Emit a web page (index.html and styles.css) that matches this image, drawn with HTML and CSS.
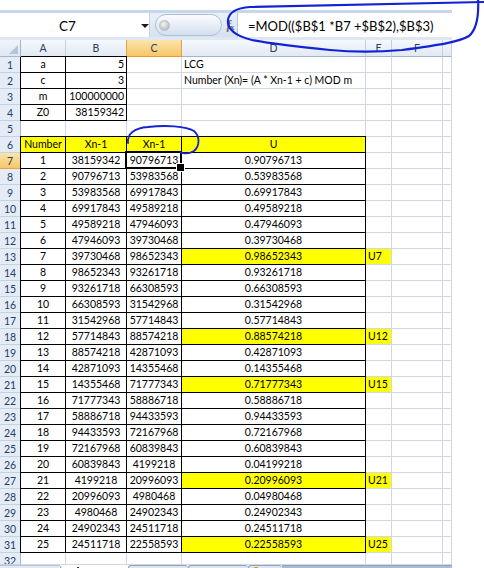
FILE: index.html
```html
<!DOCTYPE html>
<html>
<head>
<meta charset="utf-8">
<link rel="stylesheet" href="styles.css">
</head>
<body>
<div class="page">
  <div class="top"></div>
  <div class="fbar">
    <div class="namebox"><span class="ref">C7</span><span class="dd"></span></div>
    <div class="splitter"><div class="pill"><span class="knob"></span></div></div>
    <div class="fx"><i>f</i><small>x</small></div>
    <div class="formula">=MOD(($B$1 *B7 +$B$2),$B$3)</div>
  </div>
  <div class="fgap"></div>

  <div class="sheet">
    <div class="corner"><span class="tri"></span></div>
    <div class="ch">A</div><div class="ch">B</div><div class="ch on">C</div><div class="ch">D</div><div class="ch">E</div><div class="ch">F</div><div class="ch"></div>

    <div class="rh">1</div><div class="c m b">a</div><div class="c r b">5</div><div class="c"></div><div class="c l">LCG</div><div class="c"></div><div class="c"></div><div class="c"></div>
    <div class="rh">2</div><div class="c m b">c</div><div class="c r b">3</div><div class="c"></div><div class="c l">Number (Xn)= (A * Xn-1 + c) MOD m</div><div class="c"></div><div class="c"></div><div class="c"></div>
    <div class="rh">3</div><div class="c m b">m</div><div class="c r b">100000000</div><div class="c"></div><div class="c"></div><div class="c"></div><div class="c"></div><div class="c"></div>
    <div class="rh">4</div><div class="c m b">Z0</div><div class="c r b">38159342</div><div class="c"></div><div class="c"></div><div class="c"></div><div class="c"></div><div class="c"></div>
    <div class="rh">5</div><div class="c"></div><div class="c"></div><div class="c"></div><div class="c"></div><div class="c"></div><div class="c"></div><div class="c"></div>
    <div class="rh">6</div><div class="c m b y">Number</div><div class="c m b y">Xn-1</div><div class="c m b y">Xn-1</div><div class="c m b y">U</div><div class="c"></div><div class="c"></div><div class="c"></div>

    <div class="rh on">7</div><div class="c m b">1</div><div class="c m b">38159342</div><div class="c m b sel">90796713</div><div class="c m b">0.90796713</div><div class="c"></div><div class="c"></div><div class="c"></div>
    <div class="rh">8</div><div class="c m b">2</div><div class="c m b">90796713</div><div class="c m b">53983568</div><div class="c m b">0.53983568</div><div class="c"></div><div class="c"></div><div class="c"></div>
    <div class="rh">9</div><div class="c m b">3</div><div class="c m b">53983568</div><div class="c m b">69917843</div><div class="c m b">0.69917843</div><div class="c"></div><div class="c"></div><div class="c"></div>
    <div class="rh">10</div><div class="c m b">4</div><div class="c m b">69917843</div><div class="c m b">49589218</div><div class="c m b">0.49589218</div><div class="c"></div><div class="c"></div><div class="c"></div>
    <div class="rh">11</div><div class="c m b">5</div><div class="c m b">49589218</div><div class="c m b">47946093</div><div class="c m b">0.47946093</div><div class="c"></div><div class="c"></div><div class="c"></div>
    <div class="rh">12</div><div class="c m b">6</div><div class="c m b">47946093</div><div class="c m b">39730468</div><div class="c m b">0.39730468</div><div class="c"></div><div class="c"></div><div class="c"></div>
    <div class="rh">13</div><div class="c m b">7</div><div class="c m b">39730468</div><div class="c m b">98652343</div><div class="c m b y">0.98652343</div><div class="c l y">U7</div><div class="c"></div><div class="c"></div>
    <div class="rh">14</div><div class="c m b">8</div><div class="c m b">98652343</div><div class="c m b">93261718</div><div class="c m b">0.93261718</div><div class="c"></div><div class="c"></div><div class="c"></div>
    <div class="rh">15</div><div class="c m b">9</div><div class="c m b">93261718</div><div class="c m b">66308593</div><div class="c m b">0.66308593</div><div class="c"></div><div class="c"></div><div class="c"></div>
    <div class="rh">16</div><div class="c m b">10</div><div class="c m b">66308593</div><div class="c m b">31542968</div><div class="c m b">0.31542968</div><div class="c"></div><div class="c"></div><div class="c"></div>
    <div class="rh">17</div><div class="c m b">11</div><div class="c m b">31542968</div><div class="c m b">57714843</div><div class="c m b">0.57714843</div><div class="c"></div><div class="c"></div><div class="c"></div>
    <div class="rh">18</div><div class="c m b">12</div><div class="c m b">57714843</div><div class="c m b">88574218</div><div class="c m b y">0.88574218</div><div class="c l y">U12</div><div class="c"></div><div class="c"></div>
    <div class="rh">19</div><div class="c m b">13</div><div class="c m b">88574218</div><div class="c m b">42871093</div><div class="c m b">0.42871093</div><div class="c"></div><div class="c"></div><div class="c"></div>
    <div class="rh">20</div><div class="c m b">14</div><div class="c m b">42871093</div><div class="c m b">14355468</div><div class="c m b">0.14355468</div><div class="c"></div><div class="c"></div><div class="c"></div>
    <div class="rh">21</div><div class="c m b">15</div><div class="c m b">14355468</div><div class="c m b">71777343</div><div class="c m b y">0.71777343</div><div class="c l y">U15</div><div class="c"></div><div class="c"></div>
    <div class="rh">22</div><div class="c m b">16</div><div class="c m b">71777343</div><div class="c m b">58886718</div><div class="c m b">0.58886718</div><div class="c"></div><div class="c"></div><div class="c"></div>
    <div class="rh">23</div><div class="c m b">17</div><div class="c m b">58886718</div><div class="c m b">94433593</div><div class="c m b">0.94433593</div><div class="c"></div><div class="c"></div><div class="c"></div>
    <div class="rh">24</div><div class="c m b">18</div><div class="c m b">94433593</div><div class="c m b">72167968</div><div class="c m b">0.72167968</div><div class="c"></div><div class="c"></div><div class="c"></div>
    <div class="rh">25</div><div class="c m b">19</div><div class="c m b">72167968</div><div class="c m b">60839843</div><div class="c m b">0.60839843</div><div class="c"></div><div class="c"></div><div class="c"></div>
    <div class="rh">26</div><div class="c m b">20</div><div class="c m b">60839843</div><div class="c m b">4199218</div><div class="c m b">0.04199218</div><div class="c"></div><div class="c"></div><div class="c"></div>
    <div class="rh">27</div><div class="c m b">21</div><div class="c m b">4199218</div><div class="c m b">20996093</div><div class="c m b y">0.20996093</div><div class="c l y">U21</div><div class="c"></div><div class="c"></div>
    <div class="rh">28</div><div class="c m b">22</div><div class="c m b">20996093</div><div class="c m b">4980468</div><div class="c m b">0.04980468</div><div class="c"></div><div class="c"></div><div class="c"></div>
    <div class="rh">29</div><div class="c m b">23</div><div class="c m b">4980468</div><div class="c m b">24902343</div><div class="c m b">0.24902343</div><div class="c"></div><div class="c"></div><div class="c"></div>
    <div class="rh">30</div><div class="c m b">24</div><div class="c m b">24902343</div><div class="c m b">24511718</div><div class="c m b">0.24511718</div><div class="c"></div><div class="c"></div><div class="c"></div>
    <div class="rh">31</div><div class="c m b">25</div><div class="c m b">24511718</div><div class="c m b">22558593</div><div class="c m b y">0.22558593</div><div class="c l y">U25</div><div class="c"></div><div class="c"></div>
  </div>
  <div class="sheet tail">
    <div class="rh">32</div><div class="c"></div><div class="c"></div><div class="c"></div><div class="c"></div><div class="c"></div><div class="c"></div><div class="c"></div>
  </div>
  <div class="tabs">
    <div class="tnav"></div>
    <div class="tab act"><span class="tmark"></span></div>
    <div class="tab"></div>
    <div class="tab"></div>
    <div class="tab new"><span class="star"></span></div>
    <div class="trest"></div>
  </div>

  <svg class="ink" width="484" height="568" viewBox="0 0 484 568">
    <path d="M478 -2 C479 15 477 29 469 36 C459 42 440 45 402 50 C380 52 360 53 330 50 C300 47 272 44 252 40 C236 36 227 29 228 20 C229 12 236 8 250 7 C320 5 400 4 484 2" />
    <path d="M128 143 C127 134 134 128 148 127 C165 125 186 126 194 131 C200 136 200 146 194 151 C189 154 184 154 180 152" class="thin"/>
  </svg>
</div>
</body>
</html>
```

FILE: styles.css
```css
* {
  box-sizing: border-box;
  margin: 0;
  padding: 0;
}

body {
  width: 484px;
  height: 568px;
  overflow: hidden;
  background: #fff;
  font-family: Lato, "Liberation Sans", sans-serif;
  color: #000;
}

.page {
  position: relative;
  width: 484px;
  height: 568px;
  overflow: hidden;
}

.top {
  height: 10px;
  width: 452px;
}

.fbar {
  display: flex;
  width: 452px;
  height: 27px;
  border-top: 3px solid #c7d7eb;
  background: linear-gradient(#e9f0f8, #d6e2f1);
}

.namebox {
  width: 150px;
  background: #fff;
  display: flex;
  align-items: center;
  border-right: 1px solid #c3d1e2;
}

.ref {
  width: 136px;
  text-align: center;
  font-size: 13.5px;
  line-height: 24px;
  padding-top: 1px;
}

.dd {
  width: 0;
  height: 0;
  border-left: 4px solid transparent;
  border-right: 4px solid transparent;
  border-top: 4px solid #1a1a1a;
  margin-left: 6px;
  margin-top: 2px;
}

.splitter {
  width: 74px;
  display: flex;
  align-items: center;
  padding-left: 5px;
}

.pill {
  width: 67px;
  height: 22px;
  border-radius: 11px;
  background: linear-gradient(#fbfcfe, #d3dfee);
  border: 1px solid #aebfd5;
  display: flex;
  align-items: center;
  padding-left: 3px;
}

.knob {
  width: 11px;
  height: 11px;
  border-radius: 50%;
  background: radial-gradient(circle at 40% 35%, #f4f4f4, #a4abb3);
  border: 1px solid #b8bfc8;
}

.fx {
  width: 13px;
  display: flex;
  align-items: center;
  justify-content: center;
  font-family: "Liberation Serif", serif;
  color: #6a6a6a;
  font-size: 13px;
  font-weight: bold;
}

.fx small {
  font-size: 9px;
  margin-left: -1px;
  margin-top: 4px;
}

.formula {
  flex: 1;
  background: #fff;
  border-left: 1px solid #b6c6da;
  padding-left: 10px;
  font-size: 13px;
  line-height: 24px;
  padding-top: 1px;
  white-space: nowrap;
}

.fgap {
  height: 3px;
  width: 452px;
  background: #dfe7f1;
}

.sheet {
  display: grid;
  grid-template-columns: 21px 45px 61px 55px 184px 26px 51px 9px;
  grid-template-rows: 17px;
  grid-auto-rows: 16px;
  width: 452px;
  font-size: 10.5px;
}

.sheet.tail {
  grid-template-rows: 12px;
  grid-auto-rows: 12px;
}

.tail > div {
  overflow: hidden;
}

.corner {
  background: linear-gradient(#f1f5fa, #dfe7f2);
  border-right: 1px solid #9eb6ce;
  border-bottom: 1px solid #9eb6ce;
  position: relative;
}

.tri {
  position: absolute;
  right: 2px;
  bottom: 2px;
  width: 0;
  height: 0;
  border-left: 9px solid transparent;
  border-bottom: 9px solid #b4c4d9;
}

.ch {
  background: linear-gradient(#f6f9fc, #e2e9f3);
  border-right: 1px solid #c4cfdd;
  border-bottom: 1px solid #9eb6ce;
  text-align: center;
  line-height: 17px;
  color: #27405e;
  overflow: hidden;
}

.ch.on {
  background: linear-gradient(#fbe4ad, #f6c767);
  border-left: 1px solid #f0a040;
  border-right: 1px solid #f0a040;
  border-bottom: 1px solid #f29436;
  margin-left: -1px;
}

.rh {
  background: #e4ecf7;
  border-right: 1px solid #9eb6ce;
  border-bottom: 1px solid #c5d2e2;
  text-align: center;
  line-height: 16px;
  color: #27405e;
}

.rh.on {
  background: linear-gradient(#fbe4ad, #f6c767);
  border-right: 1px solid #f29436;
  border-bottom: 1px solid #f0a040;
}

.c {
  border-right: 1px solid #d0d7e5;
  border-bottom: 1px solid #d0d7e5;
  line-height: 15px;
  padding: 0 2px;
  white-space: nowrap;
}

.m { text-align: center; }
.r { text-align: right; }
.l { text-align: left; }

.b {
  border-right-color: #000;
  border-bottom-color: #000;
  box-shadow: -1px 0 0 #000, 0 -1px 0 #000, -1px -1px 0 #000;
}

.y {
  background: #ffff00;
}

.sel {
  position: relative;
}

.sel::after {
  content: "";
  position: absolute;
  top: -2px;
  left: -2px;
  right: -1px;
  bottom: -1px;
  border: 2px solid #000;
  box-shadow: inset 0 0 0 1px #fff;
}

.sel::before {
  content: "";
  position: absolute;
  right: -4px;
  bottom: -4px;
  width: 7px;
  height: 7px;
  background: #000;
  border: 1px solid #fff;
  z-index: 2;
}

.tabs {
  display: flex;
  width: 452px;
  height: 8px;
}

.tnav {
  width: 60px;
  background: #e3e9f1;
  border-top: 1px solid #b8c6d8;
}

.tab {
  width: 60px;
  background: #dde5ef;
  border-top: 1px solid #8ea4bf;
  border-left: 1px solid #8ea4bf;
  border-radius: 3px 3px 0 0;
}

.tab.act {
  width: 68px;
  background: #fff;
  border-top: 1px solid #fff;
  position: relative;
}

.tmark {
  position: absolute;
  left: 16px;
  top: 1px;
  width: 2px;
  height: 2px;
  background: #333;
}

.tab.new {
  width: 34px;
  position: relative;
}

.star {
  position: absolute;
  left: 5px;
  top: 1px;
  width: 4px;
  height: 3px;
  background: #e89a2a;
}

.trest {
  flex: 1;
  background: #a9bcd5;
  border-top: 1px solid #8ea4bf;
}

.ink {
  position: absolute;
  left: 0;
  top: 0;
  pointer-events: none;
}

.ink path {
  fill: none;
  stroke: #1222d4;
  stroke-width: 2.2;
  stroke-linecap: round;
  stroke-linejoin: round;
}

.ink path.thin {
  stroke-width: 1.8;
}
```
